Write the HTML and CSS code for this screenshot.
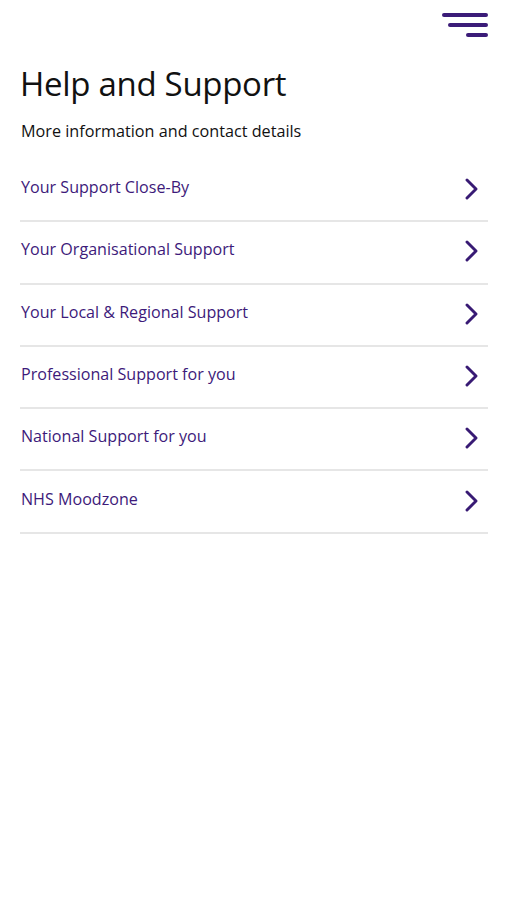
FILE: index.html
```html
<!DOCTYPE html>
<html lang="en">
<head>
<meta charset="utf-8">
<link rel="stylesheet" href="styles.css">
</head>
<body>
<div class="page">
  <header class="topbar">
    <svg class="menu" width="48" height="28" viewBox="0 0 48 28">
      <line x1="2" y1="3" x2="44" y2="3"/>
      <line x1="8" y1="13" x2="44" y2="13"/>
      <line x1="26" y1="23" x2="44" y2="23"/>
    </svg>
  </header>
  <h1 class="title">Help and Support</h1>
  <p class="subtitle">More information and contact details</p>
  <ul class="list">
    <li class="item"><span>Your Support Close-By</span><svg class="chev" viewBox="0 0 14 22"><polyline points="3,2 12,11 3,20"/></svg></li>
    <li class="item"><span>Your Organisational Support</span><svg class="chev" viewBox="0 0 14 22"><polyline points="3,2 12,11 3,20"/></svg></li>
    <li class="item"><span>Your Local &amp; Regional Support</span><svg class="chev" viewBox="0 0 14 22"><polyline points="3,2 12,11 3,20"/></svg></li>
    <li class="item"><span>Professional Support for you</span><svg class="chev" viewBox="0 0 14 22"><polyline points="3,2 12,11 3,20"/></svg></li>
    <li class="item"><span>National Support for you</span><svg class="chev" viewBox="0 0 14 22"><polyline points="3,2 12,11 3,20"/></svg></li>
    <li class="item"><span>NHS Moodzone</span><svg class="chev" viewBox="0 0 14 22"><polyline points="3,2 12,11 3,20"/></svg></li>
  </ul>
</div>
</body>
</html>
```

FILE: styles.css
```css
html, body {
  margin: 0;
  padding: 0;
  background: #ffffff;
}
.page {
  font-family: "Open Sans", "Noto Sans", sans-serif;
  padding: 0 19px 0 20px;
}
.topbar {
  display: flex;
  justify-content: flex-end;
  padding-top: 12px;
  height: 30px;
}
.menu {
  margin-right: -2px;
}
.menu line {
  stroke: #3b1c78;
  stroke-width: 4;
  stroke-linecap: round;
}
.title {
  margin: 20px 0 0 0;
  font-size: 33px;
  font-weight: 400;
  line-height: 44px;
  color: #111111;
  letter-spacing: -0.3px;
}
.subtitle {
  margin: 14px 0 0 1px;
  font-size: 16.2px;
  line-height: 22px;
  color: #111111;
}
.list {
  list-style: none;
  margin: 18px 0 0 0;
  padding: 0;
}
.item {
  display: flex;
  align-items: center;
  justify-content: space-between;
  height: 60.3px;
  border-bottom: 2px solid #e6e6e6;
  color: #3d1a7a;
  font-size: 16.1px;
  padding-left: 1px;
}
.item span {
  margin-top: -6px;
}
.chev {
  width: 14px;
  height: 22px;
  margin-right: 10px;
  margin-top: -2px;
}
.chev polyline {
  fill: none;
  stroke: #381a74;
  stroke-width: 2.9;
  stroke-linecap: round;
  stroke-linejoin: round;
}
```
